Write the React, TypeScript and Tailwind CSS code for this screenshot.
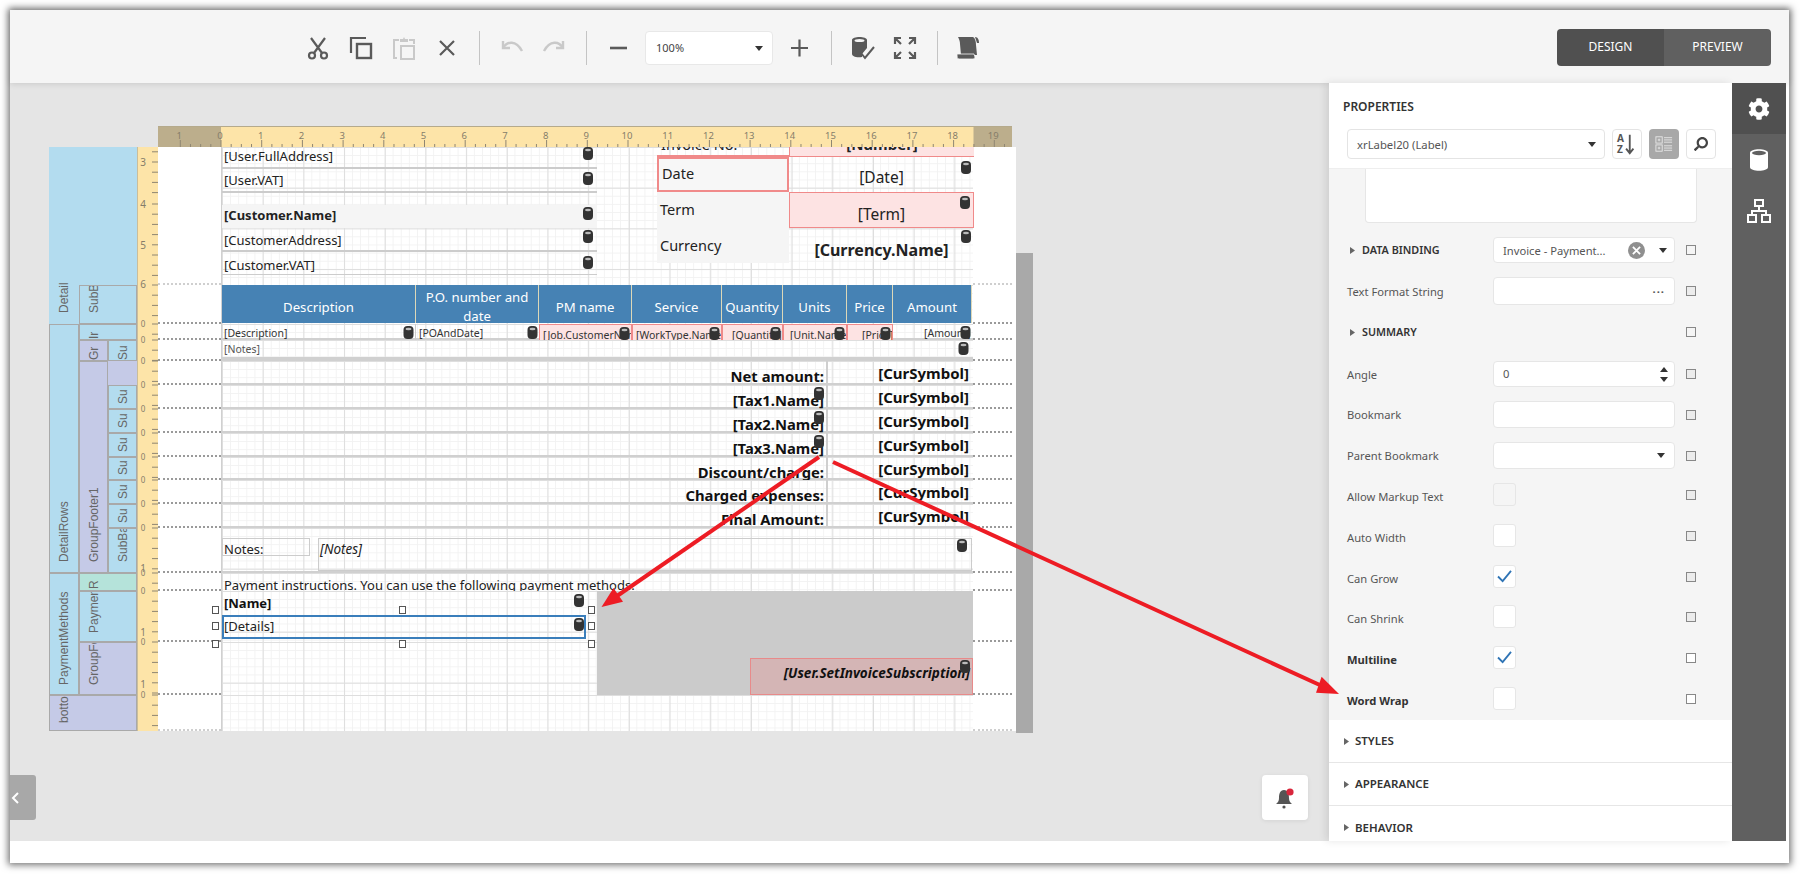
import { FaCog, FaSearch } from "react-icons/fa";

const GRID =
  "bg-[linear-gradient(to_right,#dedede_1px,transparent_1px),linear-gradient(to_bottom,#dedede_1px,transparent_1px),linear-gradient(to_right,#f2f2f2_1px,transparent_1px),linear-gradient(to_bottom,#f2f2f2_1px,transparent_1px)] bg-[size:40.7px_40.7px,40.7px_40.7px,8.14px_8.14px,8.14px_8.14px] bg-white";

function Db({ className = "" }: { className?: string }) {
  return (
    <svg viewBox="0 0 10 13" className={"absolute z-10 h-[13px] " + className}>
      <rect x="0" y="0" width="10" height="13" rx="4" fill="#333" />
      <ellipse cx="5" cy="3" rx="3" ry="1.3" fill="#bbb" />
    </svg>
  );
}

function HRuler() {
  const nums = Array.from({ length: 21 }, (_, i) => i - 1);
  const ticks = Array.from({ length: 84 }, (_, i) => i);
  return (
    <svg width="854" height="21" className="block font-['Noto_Sans',sans-serif]">
      <rect width="854" height="21" fill="#fde4a8" />
      <rect width="63" height="21" fill="#bcae8c" />
      <rect x="815.5" width="39" height="21" fill="#bcae8c" />
      <rect width="854" height="1" fill="#b5aa8c" />
      {ticks.map((i) => (
        <line key={i} x1={22.3 + i * 10.175} x2={22.3 + i * 10.175} y1={i % 4 === 0 ? 14 : 18} y2="21" stroke="#8f8672" />
      ))}
      {nums.map((n) => (
        <text key={n} x={62 + n * 40.7} y="13" fontSize="9.5" fill="#857d6a" textAnchor="middle">
          {Math.abs(n)}
        </text>
      ))}
    </svg>
  );
}

function VRuler() {
  const starts = [285, 324, 340, 361, 385, 409, 433, 457, 480, 504, 528, 573, 591, 642, 695];
  const ends = [324, 340, 361, 385, 409, 433, 457, 480, 504, 528, 573, 591, 642, 695, 731];
  const top = [162, 172.2, 182.4, 192.6, 151.8, 204, 214.2, 224.4, 234.6, 244.8, 255, 265.2, 275.4];
  const nums: [number, string][] = [[162, "3"], [204, "4"], [245, "5"], [284, "6"], [568, "1"], [632, "1"], [684, "1"]];
  const ticks: number[] = [...top];
  starts.forEach((s, i) => {
    for (let y = s; y < ends[i]; y += 10.2) ticks.push(y);
  });
  return (
    <svg width="21" height="584" className="block font-['Noto_Sans',sans-serif]">
      <rect width="21" height="584" fill="#fde4a8" />
      <rect width="1" height="584" fill="#c9bd9b" />
      {ticks.map((y, i) => (
        <line key={i} x1="15" x2="21" y1={y - 147} y2={y - 147} stroke="#8f8672" />
      ))}
      {nums.map(([y, t]) => (
        <text key={y} x="6" y={y - 147 + 4} fontSize="10" fill="#857d6a" textAnchor="middle">
          {t}
        </text>
      ))}
      {starts.slice(1).map((y) => (
        <text key={y} x="6" y={y - 147 + 3} fontSize="8" fill="#857d6a" textAnchor="middle">
          0
        </text>
      ))}
    </svg>
  );
}

function Label({ children, className = "" }: { children?: React.ReactNode; className?: string }) {
  return (
    <div
      className={
        "flex overflow-hidden whitespace-nowrap [writing-mode:vertical-rl] rotate-180 text-[12px] text-[#666] font-['Liberation_Sans',sans-serif] " +
        className
      }
    >
      {children}
    </div>
  );
}

const cellB = " border border-[#a9a9a9] items-center justify-start ";
const wide = " border border-[#a9a9a9] items-start justify-start pr-[5px] ";

function BandTree() {
  const blue = "bg-[#b3dcef]";
  const pur = "bg-[#c5cae7]";
  return (
    <div className="w-[88px] grid grid-cols-[30px_29px_29px] grid-rows-[138px_39px_16px_21px_24px_24px_24px_24px_23px_24px_24px_45px_18px_51px_53px_36px] shrink-0">
      <Label className={blue + " col-start-1 row-start-1 row-span-2 pt-[11px] items-center justify-start"}>Detail</Label>
      <div className={blue + " col-start-2 col-span-2 row-start-1"} />
      <Label className={blue + wide + "col-start-2 col-span-2 row-start-2 pt-[10px]"}>SubB</Label>
      <Label className={blue + cellB + "col-start-1 row-start-3 row-span-10 pt-[10px]"}>DetailRows</Label>
      <Label className={blue + wide + "col-start-2 col-span-2 row-start-3 pt-[0px]"}>Ir</Label>
      <Label className={pur + cellB + "col-start-2 row-start-4 pt-[0px]"}>Gr</Label>
      <Label className={blue + cellB + "col-start-3 row-start-4 pt-[0px]"}>Su</Label>
      <Label className={pur + cellB + "col-start-2 row-start-5 row-span-8 pt-[10px]"}>GroupFooter1</Label>
      <div className={pur + " col-start-3 row-start-5"} />
      <Label className={blue + cellB + "col-start-3 row-start-6 pt-[4px]"}>Su</Label>
      <Label className={blue + cellB + "col-start-3 row-start-7 pt-[4px]"}>Su</Label>
      <Label className={blue + cellB + "col-start-3 row-start-8 pt-[4px]"}>Su</Label>
      <Label className={blue + cellB + "col-start-3 row-start-9 pt-[4px]"}>Su</Label>
      <Label className={blue + cellB + "col-start-3 row-start-10 pt-[4px]"}>Su</Label>
      <Label className={blue + cellB + "col-start-3 row-start-11 pt-[4px]"}>Su</Label>
      <Label className={blue + cellB + "col-start-3 row-start-12 pt-[10px]"}>SubBa</Label>
      <Label className={blue + cellB + "col-start-1 row-start-13 row-span-3 pt-[9px]"}>PaymentMethods</Label>
      <Label className={"bg-[#b5e3da]" + wide + "col-start-2 col-span-2 row-start-13 pt-[1px]"}>R</Label>
      <Label className={blue + wide + "col-start-2 col-span-2 row-start-14 pt-[8px]"}>Paymen</Label>
      <Label className={pur + wide + "col-start-2 col-span-2 row-start-15 pt-[9px]"}>GroupFo</Label>
      <Label className={pur + " border border-[#a9a9a9] col-start-1 col-span-3 row-start-16 items-start justify-end pr-[5px]"}>botto</Label>
    </div>
  );
}

function Band({
  h,
  children,
  line = true,
  contentClass = "",
}: {
  h: string;
  children?: React.ReactNode;
  line?: boolean;
  contentClass?: string;
}) {
  const dots = line ? "border-b-2 border-dotted border-[#9a9a9a]" : "border-b-2 border-dotted border-[#cfcfcf]";
  return (
    <div className={"flex w-[858px] bg-white " + h}>
      <div className={"w-[63px] shrink-0 " + dots} />
      <div className={"relative w-[752px] shrink-0 border-l border-[#d0d0d0] " + GRID + " " + contentClass}>{children}</div>
      <div className={"w-[39px] shrink-0 " + dots} />
    </div>
  );
}

function Stack({
  children,
  className = "",
  db,
}: {
  children: React.ReactNode;
  className?: string;
  db?: string;
}) {
  return (
    <div className={"relative flex items-center pl-[2px] text-[13px] text-[#222] whitespace-nowrap " + className}>
      {children}
      {db && <Db className={"w-[10px] " + db} />}
    </div>
  );
}

function SumRow({ label, h, db }: { label: string; h: string; db?: boolean }) {
  return (
    <Band h={h} contentClass="border-b-2 border-[#bdbdbd] flex">
      <div className="relative w-[606px] h-full flex items-start justify-end pr-[2px] pt-[5px] font-bold text-[14.8px] leading-[20px] text-[#111] border-r-2 border-[#cfcfcf] whitespace-nowrap">
        {label}
        {db && <Db className="w-[10px] top-[2px] right-[2px]" />}
      </div>
      <div className="w-[143px] h-full flex items-start justify-end pr-[2px] pt-[2px] font-bold text-[15px] leading-[20px] text-[#111]">[CurSymbol]</div>
    </Band>
  );
}

function TableHead() {
  const cols: [string, string][] = [
    ["w-[194px]", "Description"],
    ["w-[123px]", "P.O. number and date"],
    ["w-[93px]", "PM name"],
    ["w-[90px]", "Service"],
    ["w-[61px]", "Quantity"],
    ["w-[64px]", "Units"],
    ["w-[46px]", "Price"],
    ["w-[79px]", "Amount"],
  ];
  return (
    <div className="flex h-[38px]">
      {cols.map(([w, t]) => (
        <div key={t} className={"flex items-center justify-center text-center px-[2px] pt-[6px] bg-[#4682b4] text-white text-[13.2px] leading-[19px] border-r border-[#ddd8b8] " + w}>
          {t}
        </div>
      ))}
    </div>
  );
}

function TableRow() {
  const pink = "bg-[#fde3e3] border border-b-0 border-[#f08a8a]";
  const cols: [string, string][] = [
    ["w-[194px] border-r border-[#ccc] pl-[2px] pt-[1px]", "[Description]"],
    ["w-[123px] pl-[3px] pt-[1px]", "[POAndDate]"],
    ["w-[93px] pl-[3px] pt-[2px] " + pink, "[Job.CustomerName]"],
    ["w-[90px] pl-[3px] pt-[2px] " + pink, "[WorkType.Name]"],
    ["w-[61px] pl-[9px] pt-[2px] " + pink, "[Quantity]"],
    ["w-[64px] pl-[6px] pt-[2px] " + pink, "[Unit.Name]"],
    ["w-[46px] pl-[14px] pt-[2px] " + pink, "[Price]"],
    ["w-[79px] pl-[31px] pt-[1px]", "[Amount]"],
  ];
  return (
    <div className="flex h-[16px]">
      {cols.map(([w, t]) => (
        <div key={t} className={"relative overflow-hidden whitespace-nowrap text-[10.5px] leading-[16px] text-[#333] " + w}>
          {t}
          <Db className="top-[2px] right-[1px] w-[11px]" />
        </div>
      ))}
    </div>
  );
}

function Handle({ className }: { className: string }) {
  return <div className={"absolute z-20 w-[7px] h-[8px] bg-white border border-[#555] " + className} />;
}

function Canvas() {
  return (
    <div className="pl-[39px] pt-[43px]">
      <div className="ml-[109px]">
        <HRuler />
      </div>
      <div className="flex">
        <BandTree />
        <div className="shrink-0">
          <VRuler />
        </div>
        <div className="w-[858px] shrink-0">
          <Band h="h-[138px]" line={false}>
            <div className="absolute left-0 top-0 w-[375px] flex flex-col">
              <Stack className="h-[23px] border-b-2 border-[#ccc] -mt-[1px]" db="top-[1px] right-[4px]">[User.FullAddress]</Stack>
              <Stack className="h-[23px] border-b-2 border-[#ccc] mt-[1px]" db="top-[2px] right-[4px]">[User.VAT]</Stack>
              <div className="h-[12px]" />
              <Stack className="h-[23px] bg-[#f5f5f5] font-bold pb-[1px]" db="top-[2px] right-[4px]">[Customer.Name]</Stack>
              <Stack className="h-[24px] border-b-2 border-[#ccc] pt-[3px]" db="top-[2px] right-[4px]">[CustomerAddress]</Stack>
              <Stack className="h-[23px] border-b border-[#ccc] pt-[5px]" db="top-[4px] right-[4px]">[Customer.VAT]</Stack>
            </div>
            <div className="absolute left-[435px] top-0 w-[317px] flex flex-col text-[#222]">
              <div className="flex h-[10px]">
                <div className="w-[132px] overflow-hidden border-b-2 border-[#f08a8a] pl-[4px] text-[14.5px] leading-[0px]"><span className="relative -top-[3px]">Invoice No.</span></div>
                <div className="w-[185px] bg-[#fde3e3] overflow-hidden border-b border-[#f08a8a] border-l text-center font-bold text-[15px] leading-[0px]"><span className="relative -top-[3px]">[Number]</span></div>
              </div>
              <div className="flex h-[35px]">
                <div className="w-[132px] flex items-center pl-[3px] border-2 border-[#f08a8a] text-[14.5px] bg-[#f7f7f7] pb-[1px]">Date</div>
                <div className="relative w-[185px] flex items-center justify-center pt-[7px] text-[15.5px]">[Date]<Db className="w-[10px] top-[4px] right-[3px]" /></div>
              </div>
              <div className="flex h-[36px]">
                <div className="w-[132px] flex items-center pl-[3px] bg-[#f5f5f5] text-[14.5px]">Term</div>
                <div className="relative w-[185px] flex items-center justify-center pt-[9px] text-[15.5px] bg-[#fde3e3] border border-[#f08a8a]">[Term]<Db className="w-[10px] top-[3px] right-[3px]" /></div>
              </div>
              <div className="flex h-[35px]">
                <div className="w-[132px] flex items-center pl-[3px] bg-[#f5f5f5] text-[14.5px]">Currency</div>
                <div className="relative w-[185px] flex items-center justify-center pt-[9px] text-[16px] font-bold">[Currency.Name]<Db className="w-[10px] top-[2px] right-[3px]" /></div>
              </div>
            </div>
          </Band>
          <Band h="h-[39px]"><TableHead /></Band>
          <Band h="h-[16px]" contentClass="border-b-2 border-[#bdbdbd]"><TableRow /></Band>
          <Band h="h-[21px]" contentClass="border-b-4 border-[#bdbdbd]">
            <div className="pl-[2px] text-[10.5px] leading-[18px] text-[#555]">[Notes]</div>
            <Db className="top-[2px] right-[4px] w-[11px]" />
          </Band>
          <SumRow h="h-[24px]" label="Net amount:" />
          <SumRow h="h-[24px]" label="[Tax1.Name]" db />
          <SumRow h="h-[24px]" label="[Tax2.Name]" db />
          <SumRow h="h-[24px]" label="[Tax3.Name]" db />
          <SumRow h="h-[23px]" label="Discount/charge:" />
          <SumRow h="h-[24px]" label="Charged expenses:" />
          <SumRow h="h-[24px]" label="Final Amount:" />
          <Band h="h-[45px]" contentClass="border-b-2 border-[#bdbdbd]">
            <div className="absolute left-0 top-[10px] w-[88px] h-[18px] border border-[#ccc] pl-[1px] text-[13px] leading-[20px] text-[#222]">Notes:</div>
            <div className="absolute left-[96px] top-[10px] w-[654px] h-[33px] border border-[#ccc] pl-[1px] text-[13.5px] leading-[20px] italic text-[#222]">[Notes]</div>
            <Db className="w-[10px] top-[11px] right-[6px]" />
          </Band>
          <Band h="h-[18px]">
            <div className="h-full overflow-hidden pl-[2px] text-[13px] leading-[24px] whitespace-nowrap text-[#222]">
              Payment instructions. You can use the following payment methods:
            </div>
          </Band>
          <Band h="h-[51px]">
            <div className="absolute left-[375px] top-0 w-[376px] h-full bg-[#cbcbcb]" />
            <div className="absolute left-0 top-0 w-[375px] h-[24px] pl-[2px] font-bold text-[13px] leading-[25px] text-[#111]">[Name]</div>
            <Db className="w-[10px] top-[3px] left-[352px]" />
            <div className="absolute left-0 top-[24px] w-[364px] h-[24px] border-2 border-[#3a7ebb] pl-[0px] text-[13px] leading-[18px] text-[#222]">[Details]</div>
            <Db className="w-[10px] top-[27px] left-[352px]" />
            <Handle className="left-[-10px] top-[15px]" />
            <Handle className="left-[177px] top-[15px]" />
            <Handle className="left-[366px] top-[15px]" />
            <Handle className="left-[-10px] top-[31px]" />
            <Handle className="left-[366px] top-[31px]" />
            <Handle className="left-[-10px] top-[49px]" />
            <Handle className="left-[177px] top-[49px]" />
            <Handle className="left-[366px] top-[49px]" />
          </Band>
          <Band h="h-[53px]">
            <div className="absolute left-[375px] top-0 w-[376px] h-full bg-[#cbcbcb]" />
            <div className="absolute right-0 top-[16px] w-[223px] h-[37px] bg-[#d4b5b5] border border-[#e88a8a] pr-[2px] pb-[6px] flex items-center justify-end font-bold italic text-[13.5px] text-[#111] whitespace-nowrap">
              [User.SetInvoiceSubscription]
            </div>
            <Db className="w-[10px] top-[18px] right-[3px]" />
          </Band>
          <Band h="h-[36px]" line={false} />
        </div>
        <div className="w-[17px] h-[480px] mt-[106px] bg-[#a9a9a9] shrink-0" />
      </div>
    </div>
  );
}

function ToolIcon({ children, muted }: { children: React.ReactNode; muted?: boolean }) {
  return (
    <svg viewBox="0 0 24 24" fill="none" stroke={muted ? "#c9c9c9" : "#5a5a5a"} strokeWidth={2.2} className="w-[24px] h-[24px]">
      {children}
    </svg>
  );
}

function Sep() {
  return <div className="w-[1px] h-[34px] bg-[#c4c4c4]" />;
}

function Caret() {
  return (
    <svg viewBox="0 0 8 5" className="w-[8px] h-[5px]">
      <path d="M0 0h8L4 5z" fill="#333" />
    </svg>
  );
}

function Toolbar() {
  return (
    <div className="relative z-10 h-[73px] shrink-0 bg-[#f5f5f5] shadow-[0_1px_6px_rgba(0,0,0,0.12)] flex items-center pl-[296px] pr-[18px] pt-[3px]">
      <div className="flex items-center">
        <div className="w-[24px] flex justify-center">
          <ToolIcon>
            <path d="M5 2l11 15M19 2L8 17" />
            <circle cx="6" cy="19.5" r="3" />
            <circle cx="18" cy="19.5" r="3" />
          </ToolIcon>
        </div>
        <div className="w-[24px] ml-[19px]">
          <ToolIcon>
            <path d="M2 17V2h15" />
            <rect x="8" y="8" width="14" height="14" strokeWidth="2.4" />
          </ToolIcon>
        </div>
        <div className="w-[24px] ml-[19px]">
          <ToolIcon muted>
            <path d="M7 4H2v18h3M17 4h5v4" strokeWidth="2" />
            <path d="M8 3h3l1-2 1 2h3v3H8z" fill="#c9c9c9" stroke="none" />
            <rect x="9" y="10" width="13" height="13" strokeWidth="2" />
          </ToolIcon>
        </div>
        <div className="w-[24px] ml-[19px]">
          <ToolIcon>
            <path d="M5 5l14 14M19 5L5 19" />
          </ToolIcon>
        </div>
        <div className="ml-[20px]"><Sep /></div>
        <div className="ml-[20px]">
          <ToolIcon muted>
            <path d="M3 5v7h7" strokeWidth="2.4" />
            <path d="M3 12C7 5 16 4 22 15" strokeWidth="2.4" />
          </ToolIcon>
        </div>
        <div className="ml-[18px]">
          <ToolIcon muted>
            <path d="M21 5v7h-7" strokeWidth="2.4" />
            <path d="M21 12C17 5 8 4 2 15" strokeWidth="2.4" />
          </ToolIcon>
        </div>
        <div className="ml-[20px]"><Sep /></div>
        <div className="ml-[20px]">
          <ToolIcon>
            <path d="M3 12h17" strokeWidth="2.6" />
          </ToolIcon>
        </div>
        <div className="ml-[14px] w-[128px] h-[34px] bg-white border border-[#e8e8e8] rounded-[4px] flex items-center justify-between pl-[10px] pr-[9px] text-[11px] text-[#444]">
          100%
          <Caret />
        </div>
        <div className="ml-[14px]">
          <ToolIcon>
            <path d="M4 12h17M12.5 3.5v17" />
          </ToolIcon>
        </div>
        <div className="ml-[20px]"><Sep /></div>
        <div className="ml-[19px]">
          <ToolIcon>
            <path d="M1 4c0-4 15-4 15 0v8l-5 6v3c-6 1-10-1-10-3z" fill="#5a5a5a" stroke="none" />
            <ellipse cx="8.5" cy="4.5" rx="5" ry="1.6" fill="#f5f5f5" stroke="none" />
            <path d="M10 17l4 5 9-11" strokeWidth="2" />
          </ToolIcon>
        </div>
        <div className="ml-[18px]">
          <ToolIcon>
            <path d="M2 8V2h6M2 2l6 6M22 8V2h-6M22 2l-6 6M2 16v6h6M2 22l6-6M22 16v6h-6M22 22l-6-6" />
          </ToolIcon>
        </div>
        <div className="ml-[20px]"><Sep /></div>
        <div className="ml-[18px]">
          <svg viewBox="0 0 24 24" className="w-[24px] h-[24px]">
            <path d="M2 1h15c2 1 3 4 3 8l1 10H5L4 8C4 5 3 3 2 1z" fill="#5a5a5a" />
            <path d="M1 18h17l1 3c0 1-1 2-2 2H3c-2 0-2-2-2-5z" fill="#5a5a5a" stroke="#f5f5f5" strokeWidth="0.8" />
            <path d="M19 1c3 0 4 3 4 6h-2z" fill="#5a5a5a" />
          </svg>
        </div>
      </div>
      <div className="ml-auto -mt-[2px] flex h-[37px] w-[214px] rounded-[4px] overflow-hidden text-[12px] text-white">
        <div className="w-[107px] bg-[#505050] flex items-center justify-center">DESIGN</div>
        <div className="flex-1 bg-[#606060] flex items-center justify-center">PREVIEW</div>
      </div>
    </div>
  );
}

function Check() {
  return (
    <svg viewBox="0 0 16 14" className="w-[15px] h-[13px]">
      <path d="M1 7l5 5 9-11" fill="none" stroke="#2f74b5" strokeWidth="2" />
    </svg>
  );
}

function Row({
  label,
  bold,
  children,
  h,
  boxClass = "bg-[#ececec]",
  labelClass = "pt-[2px]",
}: {
  label: React.ReactNode;
  bold?: boolean;
  children?: React.ReactNode;
  h: string;
  boxClass?: string;
  labelClass?: string;
}) {
  return (
    <div className={"flex items-center pl-[18px] " + h}>
      <div className={"w-[146px] shrink-0 text-[11.2px] whitespace-nowrap " + labelClass + " " + (bold ? "font-bold text-[#333]" : "text-[#555]")}>{label}</div>
      <div className="w-[182px] shrink-0">{children}</div>
      <div className={"ml-[11px] w-[10px] h-[10px] border border-[#888] shrink-0 " + boxClass} />
    </div>
  );
}

function Field({ children, className = "", h = "h-[27px]" }: { children?: React.ReactNode; className?: string; h?: string }) {
  return (
    <div className={"bg-white border border-[#e6e6e6] rounded-[4px] flex items-center pl-[9px] text-[11.2px] text-[#555] " + h + " " + className}>{children}</div>
  );
}

function CheckBox({ checked, off }: { checked?: boolean; off?: boolean }) {
  return (
    <div className={"w-[23px] h-[23px] border border-[#e6e6e6] rounded-[3px] flex items-center justify-center " + (off ? "bg-[#f5f5f5]" : "bg-white")}>
      {checked && <Check />}
    </div>
  );
}

function SectionRow({ children, line = true }: { children: string; line?: boolean }) {
  return (
    <div className={"h-[43px] shrink-0 flex items-center pl-[15px] text-[11.5px] font-semibold text-[#333] " + (line ? "border-b border-[#e6e6e6]" : "")}>
      <svg viewBox="0 0 5 7" className="w-[5px] h-[7px] mr-[6px]"><path d="M0 0l5 3.5L0 7z" fill="#666" /></svg>
      {children}
    </div>
  );
}

function Arrowed({ children }: { children: string }) {
  return (
    <span className="flex items-center text-[#333] font-semibold text-[10.8px]">
      <svg viewBox="0 0 5 7" className="w-[5px] h-[7px] ml-[3px] mr-[7px]"><path d="M0 0l5 3.5L0 7z" fill="#666" /></svg>
      {children}
    </span>
  );
}

const Low = "pt-[5px]";

function Props() {
  return (
    <div className="relative z-10 w-[403px] shrink-0 bg-white flex flex-col shadow-[-3px_0_8px_rgba(0,0,0,0.1)] overflow-hidden">
      <div className="h-[86px] shrink-0 border-b border-[#eeeeee]">
        <div className="pl-[14px] pt-[16px] text-[12px] leading-[16px] font-semibold text-[#333]">PROPERTIES</div>
        <div className="flex pl-[18px] pt-[14px]">
          <div className="w-[258px] h-[30px] border border-[#e4e4e4] rounded-[4px] flex items-center justify-between pl-[9px] pr-[8px] text-[11.3px] text-[#555]">
            <span className="pt-[2px]">xrLabel20 (Label)</span>
            <Caret />
          </div>
          <div className="ml-[7px] w-[30px] h-[30px] border border-[#e4e4e4] rounded-[4px] flex items-center justify-center">
            <svg viewBox="0 0 24 24" className="w-[22px] h-[22px] font-['Noto_Sans',sans-serif]">
              <text x="1" y="10" fontSize="11" fontWeight="700" fill="#555">A</text>
              <text x="1" y="22" fontSize="11" fontWeight="700" fill="#555">Z</text>
              <path d="M15 2v19M11 17l4 5 4-5" fill="none" stroke="#555" strokeWidth="2" />
            </svg>
          </div>
          <div className="ml-[7px] w-[30px] h-[30px] bg-[#a8a8a8] rounded-[4px] flex items-center justify-center">
            <svg viewBox="0 0 20 20" className="w-[18px] h-[18px]">
              <g fill="none" stroke="#e8e8e8">
                <rect x="1" y="2" width="7" height="7" />
                <rect x="1" y="11" width="7" height="7" />
                <path d="M4.5 4v3M3 5.5h3M4.5 13v3M3 14.5h3M10 3h9M10 5.500h9M10 8h9M10 12h9M10 14.500h9M10 17h9" />
              </g>
            </svg>
          </div>
          <div className="ml-[7px] w-[30px] h-[30px] border border-[#e4e4e4] rounded-[4px] flex items-center justify-center">
            <FaSearch className="w-[14px] h-[14px] text-[#444] -scale-x-100" />
          </div>
        </div>
      </div>
      <div className="h-[551px] shrink-0 bg-[#f5f5f5] overflow-hidden">
        <div className="ml-[36px] w-[332px] h-[54px] bg-white border border-t-0 border-[#e6e6e6] rounded-b-[4px]" />
        <div className="h-[14px]" />
        <Row h="h-[26px]" boxClass="bg-[#f5f5f5]" labelClass="pt-[0px]" label={<Arrowed>DATA BINDING</Arrowed>}>
          <Field h="h-[26px]" className="justify-between pr-[7px]">
            <span className="whitespace-nowrap pt-[2px]">Invoice - Payment...</span>
            <span className="flex items-center gap-[14px]">
              <span className="w-[17px] h-[17px] rounded-full bg-[#8f8f8f] flex items-center justify-center">
                <svg viewBox="0 0 10 10" className="w-[9px] h-[9px]"><path d="M1 1l8 8M9 1l-8 8" stroke="#fff" strokeWidth="2" /></svg>
              </span>
              <Caret />
            </span>
          </Field>
        </Row>
        <div className="h-[14px]" />
        <Row h="h-[28px]" label="Text Format String">
          <Field h="h-[28px]" className="justify-end pr-[9px] tracking-[1px] font-bold pb-[4px]">...</Field>
        </Row>
        <div className="h-[13px]" />
        <Row h="h-[28px]" boxClass="bg-[#f5f5f5]" labelClass="pt-[0px]" label={<Arrowed>SUMMARY</Arrowed>} />
        <div className="h-[15px]" />
        <Row h="h-[26px]" label="Angle">
          <Field h="h-[26px]" className="justify-between pr-[6px]">
            0
            <span className="flex flex-col gap-[5px]">
              <svg viewBox="0 0 8 5" className="w-[8px] h-[5px] rotate-180"><path d="M0 0h8L4 5z" fill="#333" /></svg>
              <Caret />
            </span>
          </Field>
        </Row>
        <div className="h-[14px]" />
        <Row h="h-[27px]" label="Bookmark"><Field /></Row>
        <div className="h-[14px]" />
        <Row h="h-[27px]" label="Parent Bookmark"><Field className="justify-end pr-[9px]"><Caret /></Field></Row>
        <div className="h-[14px]" />
        <Row h="h-[23px]" labelClass={Low} label="Allow Markup Text"><CheckBox off /></Row>
        <div className="h-[18px]" />
        <Row h="h-[23px]" labelClass={Low} label="Auto Width"><CheckBox /></Row>
        <div className="h-[18px]" />
        <Row h="h-[23px]" labelClass={Low} label="Can Grow"><CheckBox checked /></Row>
        <div className="h-[17px]" />
        <Row h="h-[23px]" labelClass={Low} label="Can Shrink"><CheckBox /></Row>
        <div className="h-[18px]" />
        <Row h="h-[23px]" labelClass={Low} bold boxClass="bg-white" label="Multiline"><CheckBox checked /></Row>
        <div className="h-[18px]" />
        <Row h="h-[23px]" labelClass={Low} bold boxClass="bg-white" label="Word Wrap"><CheckBox /></Row>
      </div>
      <SectionRow>STYLES</SectionRow>
      <SectionRow>APPEARANCE</SectionRow>
      <SectionRow line={false}>BEHAVIOR</SectionRow>
    </div>
  );
}

function Tabs() {
  return (
    <div className="relative z-10 w-[54px] shrink-0 bg-[#606060] flex flex-col items-center text-white">
      <div className="w-full h-[51px] bg-[#505050] flex items-center justify-center">
        <FaCog className="w-[22px] h-[22px]" />
      </div>
      <div className="h-[51px] flex items-center justify-center">
        <svg viewBox="0 0 18 22" className="w-[18px] h-[22px]">
          <path d="M0 4c0-5 18-5 18 0v14c0 5-18 5-18 0z" fill="#fff" />
          <ellipse cx="9" cy="4" rx="7" ry="2.2" fill="#606060" />
        </svg>
      </div>
      <div className="h-[51px] flex items-center justify-center">
        <svg viewBox="0 0 24 24" fill="none" stroke="#fff" strokeWidth="2" className="w-[24px] h-[24px]">
          <rect x="8" y="1" width="8" height="6" />
          <rect x="1" y="16" width="8" height="7" />
          <rect x="15" y="16" width="8" height="7" />
          <path d="M12 7v5M5 16v-4h14v4" />
        </svg>
      </div>
    </div>
  );
}

export default function App() {
  return (
    <div className="relative w-[1800px] h-[874px] bg-white pl-[10px] pr-[11px] pt-[10px] pb-[11px] overflow-hidden font-['Noto_Sans',sans-serif]">
      <div className="w-full h-full bg-white flex flex-col shadow-[0_0_7px_2px_rgba(0,0,0,0.55)]">
        <Toolbar />
        <div className="flex h-[758px] pr-[3px]">
          <div className="relative flex-1 bg-[#e5e5e5] overflow-hidden">
            <Canvas />
            <div className="absolute left-0 top-[692px] w-[26px] h-[45px] bg-[#a8a8a8] rounded-r-[3px] flex items-center pl-[1px]">
              <svg viewBox="0 0 8 12" className="w-[8px] h-[12px]"><path d="M7 1L2 6l5 5" fill="none" stroke="#fff" strokeWidth="2" /></svg>
            </div>
            <div className="absolute left-[1252px] top-[692px] w-[46px] h-[45px] bg-white rounded-[4px] flex items-center justify-center shadow-[0_1px_4px_rgba(0,0,0,0.08)]">
              <svg viewBox="0 0 20 22" className="w-[20px] h-[22px]">
                <path d="M9 3c-4 0-5 4-5 8 0 3-1 4-3 6h16c-2-2-3-3-3-6 0-4-1-8-5-8z" fill="#555" />
                <circle cx="9" cy="20" r="1.6" fill="#555" />
                <circle cx="15" cy="5" r="3.6" fill="#d9263c" />
              </svg>
            </div>
          </div>
          <Props />
          <Tabs />
        </div>
      </div>
      <svg className="absolute left-0 top-0 z-50 w-[1800px] h-[874px] pointer-events-none" viewBox="0 0 1800 874">
        <path d="M819 457L617 596" stroke="#ed1c24" strokeWidth="4" fill="none" />
        <polygon points="601.5,607 623,601.7 613.5,588" fill="#ed1c24" />
        <path d="M833 462L1322 686" stroke="#ed1c24" strokeWidth="4" fill="none" />
        <polygon points="1339,694 1321.6,676.7 1316,692.7" fill="#ed1c24" />
      </svg>
    </div>
  );
}
